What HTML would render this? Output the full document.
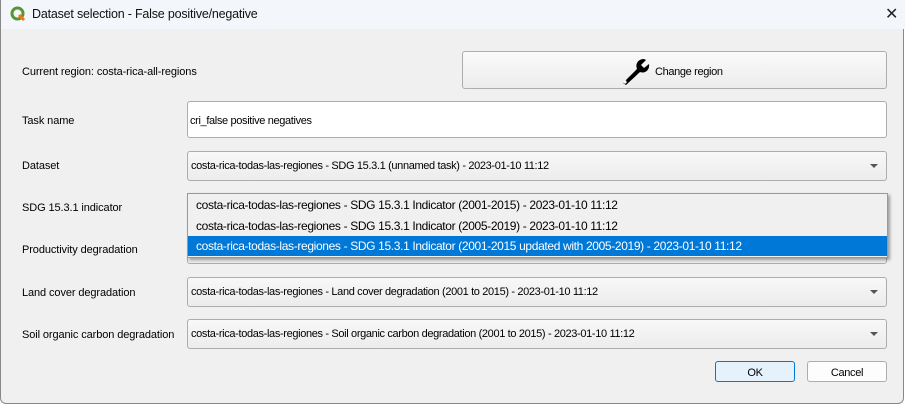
<!DOCTYPE html>
<html><head><style>
*{box-sizing:border-box;margin:0;padding:0}
body{width:909px;height:405px;background:#fff;font-family:"Liberation Sans",sans-serif;font-size:11px;letter-spacing:-0.35px;color:#000;position:relative;overflow:hidden}
.win{position:absolute;left:0;top:0;width:904px;height:404px;border:1px solid #888;border-top:none;background:#f0f0f0;border-radius:0 0 6px 6px}
.title{position:absolute;left:0;top:0;width:904px;height:29px;background:#f3f6fb}
.title span{position:absolute;left:31px;top:7px;font-size:12.5px;letter-spacing:-0.2px;color:#111}
.x{position:absolute;left:884px;top:4px;font-size:16px;color:#222}
.lbl{position:absolute;left:21px;letter-spacing:-0.1px}
.box{position:absolute;border:1px solid #adadad;border-radius:3px;background:linear-gradient(#f8f8f8,#ececec)}
.box span{position:absolute;left:3px;top:8px;white-space:nowrap}
.arr{position:absolute;right:8px;top:12px;width:0;height:0;border-left:4px solid transparent;border-right:4px solid transparent;border-top:4px solid #555}
.inp{position:absolute;background:#fff;border:1px solid #adadad;border-radius:3px}
.pop{position:absolute;left:186px;top:193px;width:701px;height:65px;background:#f0f0f0;border:1px solid #999;box-shadow:2px 2px 3px rgba(0,0,0,.35)}
.pop div{position:absolute;left:0;width:699px;height:20px;padding:3px 0 0 8px;white-space:nowrap;font-size:12px;letter-spacing:-0.35px}
.btn{position:absolute;border:1px solid #adadad;border-radius:3px;background:#fdfdfd;text-align:center;padding-top:5px}
</style></head><body>
<div class="win">
<div class="title">
<svg style="position:absolute;left:9px;top:6px" width="16" height="16" viewBox="0 0 16 16"><circle cx="7.5" cy="7.5" r="5.5" fill="none" stroke="#589632" stroke-width="3"/><path d="M9 9l5 5" stroke="#ee7913" stroke-width="3"/></svg>
<span>Dataset selection - False positive/negative</span>
<div class="x">✕</div>
</div>
<div class="lbl" style="top:66px">Current region: costa-rica-all-regions</div>
<div class="btn" style="left:461px;top:51px;width:425px;height:38px;background:linear-gradient(#fafafa,#ececec);padding-top:14px"><span style="position:absolute;left:192px;top:14px">Change region</span>
<svg style="position:absolute;left:155px;top:4px" width="34" height="30" viewBox="0 0 34 30"><path d="M5 27 L19 13 C17 8 20 3 26 3 L28 4 L23 9 L26 12 L31 8 C32 14 27 18 22 16 L8 29 Z" fill="#000"/><circle cx="7" cy="26" r="1.6" fill="#fff"/></svg></div>
<div class="lbl" style="top:115px">Task name</div>
<div class="inp" style="left:186px;top:101px;width:700px;height:37px"><span style="position:absolute;left:2px;top:13px">cri_false positive negatives</span></div>
<div class="lbl" style="top:160px">Dataset</div>
<div class="box" style="left:186px;top:151px;width:700px;height:30px"><span>costa-rica-todas-las-regiones - SDG 15.3.1 (unnamed task) - 2023-01-10 11:12</span><i class="arr"></i></div>
<div class="lbl" style="top:202px">SDG 15.3.1 indicator</div>
<div class="lbl" style="top:244px">Productivity degradation</div>
<div class="box" style="left:186px;top:235px;width:700px;height:29px"></div>
<div class="lbl" style="top:287px">Land cover degradation</div>
<div class="box" style="left:186px;top:277px;width:700px;height:30px"><span>costa-rica-todas-las-regiones - Land cover degradation (2001 to 2015) - 2023-01-10 11:12</span><i class="arr"></i></div>
<div class="lbl" style="top:329px">Soil organic carbon degradation</div>
<div class="box" style="left:186px;top:319px;width:700px;height:30px"><span>costa-rica-todas-las-regiones - Soil organic carbon degradation (2001 to 2015) - 2023-01-10 11:12</span><i class="arr"></i></div>
<div class="pop">
<div style="top:1px">costa-rica-todas-las-regiones - SDG 15.3.1 Indicator (2001-2015) - 2023-01-10 11:12</div>
<div style="top:22px">costa-rica-todas-las-regiones - SDG 15.3.1 Indicator (2005-2019) - 2023-01-10 11:12</div>
<div style="top:42px;background:#0078d7;color:#fff">costa-rica-todas-las-regiones - SDG 15.3.1 Indicator (2001-2015 updated with 2005-2019) - 2023-01-10 11:12</div>
</div>
<div class="btn" style="left:714px;top:361px;width:80px;height:21px;border-color:#0078d7;background:#e5f1fb">OK</div>
<div class="btn" style="left:806px;top:361px;width:80px;height:21px">Cancel</div>
</div>
</body></html>
